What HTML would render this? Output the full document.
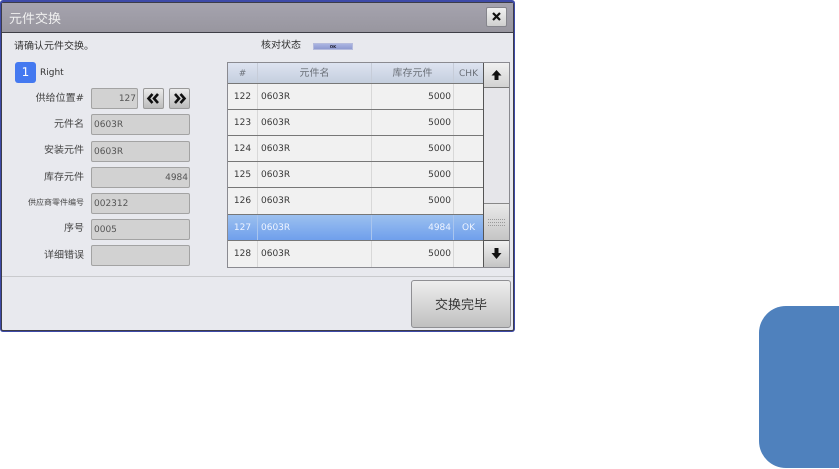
<!DOCTYPE html>
<html><head><meta charset="utf-8"><style>
html,body{margin:0;padding:0;background:#fff}
body{width:839px;height:469px;position:relative;overflow:hidden;font-family:"DejaVu Sans","Noto Sans CJK SC",sans-serif;font-size:10px;color:#333;text-rendering:geometricPrecision}
div{position:absolute;box-sizing:border-box;white-space:nowrap}
#w{left:0;top:0;width:520px;height:340px;filter:blur(.3px)}
.lb{left:0;width:84px;text-align:right;height:20px;line-height:20px;color:#444}
.f{left:91px;width:99px;height:21px;background:#d2d2d2;border:1px solid #a3a3a3;border-radius:2px;line-height:20px;padding:0 1px 0 2px;color:#555;font-size:9px}
.btn{top:88px;width:21px;height:21px;background:linear-gradient(#ebebeb,#bcbcbc);border:1px solid #9a9a9a;border-radius:2px}
.hd{top:63px;height:21px;line-height:22px;text-align:center;color:#6b7078;background:linear-gradient(#dde3f0,#c3cddd);border-right:1px solid #c6ccd8}
.r{left:228px;width:255px;height:26px;background:#f1f1f1;border-bottom:1px solid #777;line-height:26px;color:#383838;font-size:9px}
.r div{top:0;height:100%}
.a{left:0;width:30px;text-align:center;border-right:1px solid #d8d8d8}
.b{left:30px;width:114px;padding-left:3px;border-right:1px solid #d8d8d8}
.c{left:144px;width:82px;text-align:right;padding-right:2px;border-right:1px solid #d8d8d8}
.d{left:226px;width:29px;text-align:center}
.s{background:linear-gradient(#9cc0ef,#6f9fec);color:#eef4ff}
.s div{border-color:#a9c5ee}
</style></head><body>
<div id="w">
<div style="left:0;top:0;width:515px;height:332px;background:#3d4aa8;border-radius:3px"></div>
<div style="left:1px;top:2px;width:513px;height:329px;background:#e8e9ee;border:1px solid #3c3c48;border-radius:3px 3px 2px 2px"></div>
<div style="left:2px;top:3px;width:511px;height:30px;background:linear-gradient(#a5a3ae,#98969f);border-bottom:1px solid #3f3f47;color:#f0f0f0;font-size:13px;line-height:33px;padding-left:7px">元件交换</div>
<div style="left:486px;top:7px;width:21px;height:20px;background:linear-gradient(#f1f1f1,#cfcfcf);border:1px solid #85858c;border-radius:2px"><svg width="19" height="18" style="display:block"><path d="M6 5l7 7M13 5l-7 7" stroke="#111" stroke-width="2.2" fill="none"/></svg></div>

<div style="left:14px;top:40px;height:14px;line-height:14px;color:#333">请确认元件交换。</div>
<div style="left:261px;top:39px;height:14px;line-height:14px;color:#333">核对状态</div>
<div style="left:313px;top:43px;width:40px;height:7px;background:linear-gradient(#aab4e2,#8f9ad0);border:1px solid #b5bbdd;font-size:4px;line-height:5px;text-align:center;font-weight:bold;color:#223">OK</div>

<div style="left:15px;top:62px;width:21px;height:21px;background:#4479f0;border-radius:3px;color:#fff;font-size:12px;line-height:21px;text-align:center">1</div>
<div style="left:40px;top:66px;height:14px;line-height:14px;color:#333;font-size:9px">Right</div>

<div class="lb" style="top:89px">供给位置#</div>
<div class="lb" style="top:115px">元件名</div>
<div class="lb" style="top:141px">安装元件</div>
<div class="lb" style="top:168px">库存元件</div>
<div class="lb" style="top:193px;font-size:8px">供应商零件编号</div>
<div class="lb" style="top:219px">序号</div>
<div class="lb" style="top:246px">详细错误</div>

<div class="f" style="top:88px;width:47px;text-align:right">127</div>
<div class="btn" style="left:143px"><svg width="19" height="19" style="display:block"><path d="M8.500 5L4.500 9.500L8.500 14M14 5L10 9.500L14 14" stroke="#111" stroke-width="2.600" fill="none"/></svg></div>
<div class="btn" style="left:169px"><svg width="19" height="19" style="display:block"><path d="M5 5L9 9.500L5 14M10.500 5L14.500 9.500L10.500 14" stroke="#111" stroke-width="2.600" fill="none"/></svg></div>
<div class="f" style="top:114px">0603R</div>
<div class="f" style="top:141px">0603R</div>
<div class="f" style="top:167px;text-align:right">4984</div>
<div class="f" style="top:193px">002312</div>
<div class="f" style="top:219px">0005</div>
<div class="f" style="top:245px"></div>

<div style="left:227px;top:62px;width:283px;height:206px;background:#e8e9ee;border:1px solid #8a8a90"></div>
<div class="hd" style="left:228px;width:30px;font-size:9px">#</div>
<div class="hd" style="left:258px;width:114px">元件名</div>
<div class="hd" style="left:372px;width:82px">库存元件</div>
<div class="hd" style="left:454px;width:29px;border:0;font-size:9px">CHK</div>
<div style="left:228px;top:83px;width:255px;height:1px;background:#777"></div>

<div class="r" style="top:84px"><div class="a">122</div><div class="b">0603R</div><div class="c">5000</div><div class="d"></div></div>
<div class="r" style="top:110px"><div class="a">123</div><div class="b">0603R</div><div class="c">5000</div><div class="d"></div></div>
<div class="r" style="top:136px"><div class="a">124</div><div class="b">0603R</div><div class="c">5000</div><div class="d"></div></div>
<div class="r" style="top:162px"><div class="a">125</div><div class="b">0603R</div><div class="c">5000</div><div class="d"></div></div>
<div class="r" style="top:188px;height:27px"><div class="a">126</div><div class="b">0603R</div><div class="c">5000</div><div class="d"></div></div>
<div class="r s" style="top:215px;height:26px"><div class="a">127</div><div class="b">0603R</div><div class="c">4984</div><div class="d">OK</div></div>
<div class="r" style="top:241px;border-bottom:0"><div class="a">128</div><div class="b">0603R</div><div class="c">5000</div><div class="d"></div></div>

<div style="left:483px;top:63px;width:1px;height:204px;background:#555"></div>
<div style="left:484px;top:63px;width:25px;height:25px;background:linear-gradient(#f0f0f0,#d2d2d2);border-bottom:1px solid #777"><svg width="25" height="24" style="display:block"><path d="M12.500 7L7.500 12.500H10.500V17H14.500V12.500H17.500Z" fill="#111"/></svg></div>
<div style="left:484px;top:88px;width:25px;height:115px;background:#e6e6ea"></div>
<div style="left:484px;top:203px;width:25px;height:38px;background:linear-gradient(#e9e9e9,#c4c4c4);border-top:1px solid #888;border-bottom:1px solid #555"><svg width="25" height="36" style="display:block"><path d="M4 15.500H21M4 18.500H21M4 21.500H21" stroke="#9a9a9a" stroke-dasharray="1 1" fill="none"/></svg></div>
<div style="left:484px;top:241px;width:25px;height:26px;background:linear-gradient(#f0f0f0,#c4c4c4)"><svg width="25" height="26" style="display:block"><path d="M10.500 7H14.500V12H17.500L12.500 18L7.500 12H10.500Z" fill="#111"/></svg></div>

<div style="left:2px;top:276px;width:511px;height:1px;background:#c9cacd"></div>
<div style="left:411px;top:280px;width:100px;height:48px;background:linear-gradient(#ededed,#bfbfbf);border:1px solid #8f8f93;border-radius:3px;font-size:13px;line-height:49px;text-align:center;color:#333">交换完毕</div>
</div>
<div style="left:759px;top:306px;width:110px;height:162px;background:#4f81bd;border-radius:27px"></div>
</body></html>
